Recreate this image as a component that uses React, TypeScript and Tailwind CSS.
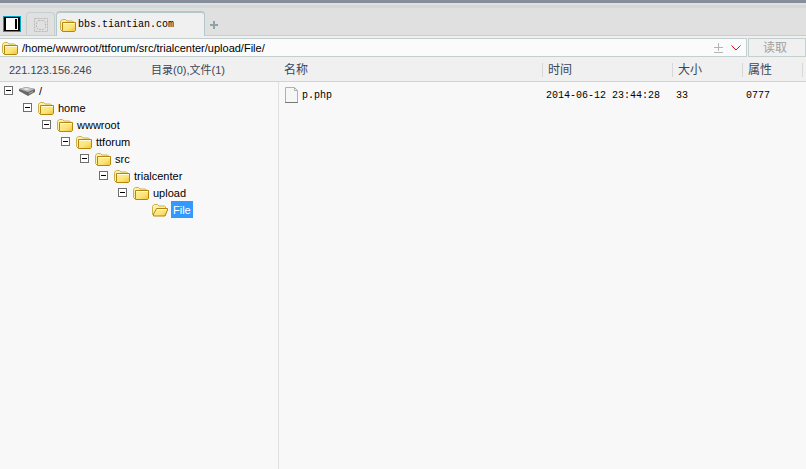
import { useId } from "react";

const ui = "font-['Liberation_Sans','Noto_Sans_CJK_SC',sans-serif]";
const mono = "font-['Liberation_Mono','Noto_Sans_CJK_SC',monospace]";

function Folder({ open = false }: { open?: boolean }) {
  const id = useId();
  return (
    <svg width="16" height="14" viewBox="0 0 16 14" className="shrink-0" aria-hidden="true">
      <defs>
        <linearGradient id={id} x1="0" y1="0" x2="1" y2="1">
          <stop offset="0" stopColor="#fdf0a0" />
          <stop offset="0.6" stopColor="#fbe377" />
          <stop offset="1" stopColor="#efc02c" />
        </linearGradient>
      </defs>
      <path d="M.5 11.500v-8l1-1.500 1-.5h3l1.500 1.500h5.500l1 1v8.500H1.500z" fill="#fcf0a8" stroke="#cdb04e" />
      {open ? (
        <>
          <path d="M4.500 5.500h11v1.500l-2.500 6H1.500v-2z" fill={`url(#${id})`} stroke="#b4860f" />
          <path d="M5 6.500h9.500" stroke="#fffbd8" />
        </>
      ) : (
        <>
          <path d="M2.500 4.500h13v8l-1 1h-12l-1-1h1z" fill={`url(#${id})`} stroke="#b4860f" />
          <path d="M3 5.500h12" stroke="#fffbd8" />
        </>
      )}
    </svg>
  );
}

function Drive() {
  return (
    <svg width="16" height="10" viewBox="0 0 16 10" className="shrink-0" aria-hidden="true">
      <path d="M0 3l7-2 9 2v3L9 10 0 5z" fill="#686868" />
      <path d="M0 3l7-2 9 2-7 3z" fill="#b8b8b8" />
      <path d="M4 3l3-1 4 1-3 1z" fill="#ededed" />
      <path d="M10 7l4-2v1l-4 2z" fill="#b5b5b5" />
    </svg>
  );
}

function Toggle({ name }: { name: string }) {
  return (
    <button aria-label={`Collapse ${name}`} className="flex size-[9px] shrink-0 items-center justify-center border border-[#6f6f6f] bg-white">
      <span className="h-px w-[5px] bg-black" />
    </button>
  );
}

const rows = [
  { name: "/", pad: "pl-1" },
  { name: "home", pad: "pl-[23px]" },
  { name: "wwwroot", pad: "pl-[42px]" },
  { name: "ttforum", pad: "pl-[61px]" },
  { name: "src", pad: "pl-[80px]" },
  { name: "trialcenter", pad: "pl-[99px]" },
  { name: "upload", pad: "pl-[118px]" },
  { name: "File", pad: "pl-[152px]" },
];

const columns = [
  { label: "名称", width: "" },
  { label: "时间", width: "w-[130px]" },
  { label: "大小", width: "w-[70px]" },
  { label: "属性", width: "w-[60px]" },
  { label: "", width: "w-1" },
];

export default function App() {
  return (
    <div className={`flex min-h-screen flex-col bg-[#f8f8f8] text-black ${ui}`}>
      <header className="flex h-9 shrink-0 flex-col bg-[#e0e0e0]">
        <div className="h-[3px] shrink-0 bg-[#868e9b]" />
        <div className="mt-0.5 h-[3px] shrink-0 bg-[#d0d8d8]" />
        <div className="flex flex-1 items-end border-b border-[#c4d0d0] pl-[3px]">
          <button aria-label="Panel" className="mb-[3px] flex h-4 w-[18px] border border-[#00a3c4] bg-black px-0.5 py-px">
            <span className="flex flex-1 justify-end bg-white py-px pr-px">
              <span className="w-0.5 bg-black" />
            </span>
          </button>
          <button aria-label="Home" className="ml-[5px] flex h-[23px] w-[29px] items-center justify-center rounded-t border border-b-0 border-[#c4cfcf] pt-0.5">
            <svg width="14" height="14" viewBox="0 0 14 14" fill="none" stroke="#b8b8b8" aria-hidden="true">
              <path d="M.5.5h13v13H.5z" strokeDasharray="2 1" />
              <path d="M4.500 2.500h5l2 2v5l-2 2h-5l-2-2v-5z" strokeDasharray="2 1" />
            </svg>
          </button>
          <button className={`-mb-px ml-px flex h-[25px] w-[149px] items-center gap-0.5 rounded-t-sm border border-t-2 border-b-0 border-[#b5c8c8] bg-[#f0f0f0] pl-[3px] text-[10px] ${mono}`}>
            <Folder />
            bbs.tiantian.com
          </button>
          <button aria-label="New tab" className="mb-1.5 ml-[5px] flex size-2 items-center justify-center">
            <svg width="8" height="8" viewBox="0 0 8 8" aria-hidden="true">
              <path d="M3 0h2v3h3v2H5v3H3V5H0V3h3z" fill="#8fa3ad" />
            </svg>
          </button>
        </div>
      </header>

      <div className="flex h-[22px] shrink-0 gap-px bg-[#f0f0f0] pt-0.5 pb-px">
        <div className="flex flex-1 items-center border border-l-0 border-[#c4d0d0] bg-[#fbfbfb] pr-1 pl-0.5">
          <Folder />
          <input
            aria-label="Path"
            defaultValue="/home/wwwroot/ttforum/src/trialcenter/upload/File/"
            className="h-full min-w-0 flex-1 bg-transparent pl-1 text-[11px] outline-none"
          />
          <svg width="9" height="10" viewBox="0 0 9 10" fill="none" stroke="#b4b4b4" className="mr-2" aria-hidden="true">
            <path d="M0 4.500h9M4.500 0v8M0 9.500h9" />
          </svg>
          <svg width="10" height="6" viewBox="0 0 10 6" fill="none" stroke="#e01010" className="mr-px" aria-hidden="true">
            <path d="M.5.5L5 5 9.500.5" />
          </svg>
        </div>
        <button className="w-[58px] border border-[#c4d0d0] pr-1 text-[12px] leading-none text-[#a0a0a0]">读取</button>
      </div>

      <main className="flex flex-1">
        <aside className="flex w-[279px] shrink-0 flex-col">
          <div className="flex h-6 shrink-0 items-center border-b border-[#d2d4d4] bg-[#f0f0f0] pt-0.5 pl-[9px] text-[11px] text-[#3c4654]">
            <span className="w-[142px]">221.123.156.246</span>
            <span>目录(0),文件(1)</span>
          </div>
          <ul className="flex-1 border-r border-[#e0e0e0] text-[11px]">
            {rows.map((r) => (
              <li key={r.name} className={`flex h-[17px] items-center ${r.pad}`}>
                {r.name !== "File" && <Toggle name={r.name} />}
                <span className={r.name === "File" ? "flex" : "ml-1.5 flex"}>
                  {r.name === "/" ? <Drive /> : <Folder open={r.name === "File"} />}
                </span>
                <span className={r.name === "File" ? "ml-[3px] bg-[#3399ff] px-0.5 pt-px leading-4 text-white" : "ml-1 pt-px leading-4"}>{r.name}</span>
              </li>
            ))}
          </ul>
        </aside>
        <section className="flex-1">
          <table className="w-full table-fixed border-separate border-spacing-0 text-left">
            <thead>
              <tr className="bg-[#f0f0f0] text-[12px] leading-none text-[#3c4654]">
                {columns.map((c, i) => (
                  <th key={i} className={`h-6 border-b border-[#d2d4d4] p-0 pt-px align-middle font-normal ${c.width}`}>
                    <div className={i === 0 ? "pl-[5px]" : "flex h-3.5 items-center border-l border-[#d8d8d8] pl-[5px]"}>{c.label}</div>
                  </th>
                ))}
              </tr>
            </thead>
            <tbody>
              <tr className={`h-[26px] text-[10px] ${mono}`}>
                <td className="p-0">
                  <div className="flex items-center gap-1 pl-1.5">
                    <svg width="13" height="16" viewBox="0 0 13 16" aria-hidden="true">
                      <path d="M.5.5h9l3 3v12H.5z" fill="#f6f6f6" stroke="#b0b0b0" />
                      <path d="M9.500.5v3h3" fill="none" stroke="#b0b0b0" />
                      <path d="M0 15.500h13" stroke="#777" />
                    </svg>
                    p.php
                  </div>
                </td>
                <td className="p-0 pl-1 whitespace-nowrap">2014-06-12 23:44:28</td>
                <td className="p-0 pl-1">33</td>
                <td className="p-0 pl-1">0777</td>
                <td className="p-0" />
              </tr>
            </tbody>
          </table>
        </section>
      </main>
    </div>
  );
}
